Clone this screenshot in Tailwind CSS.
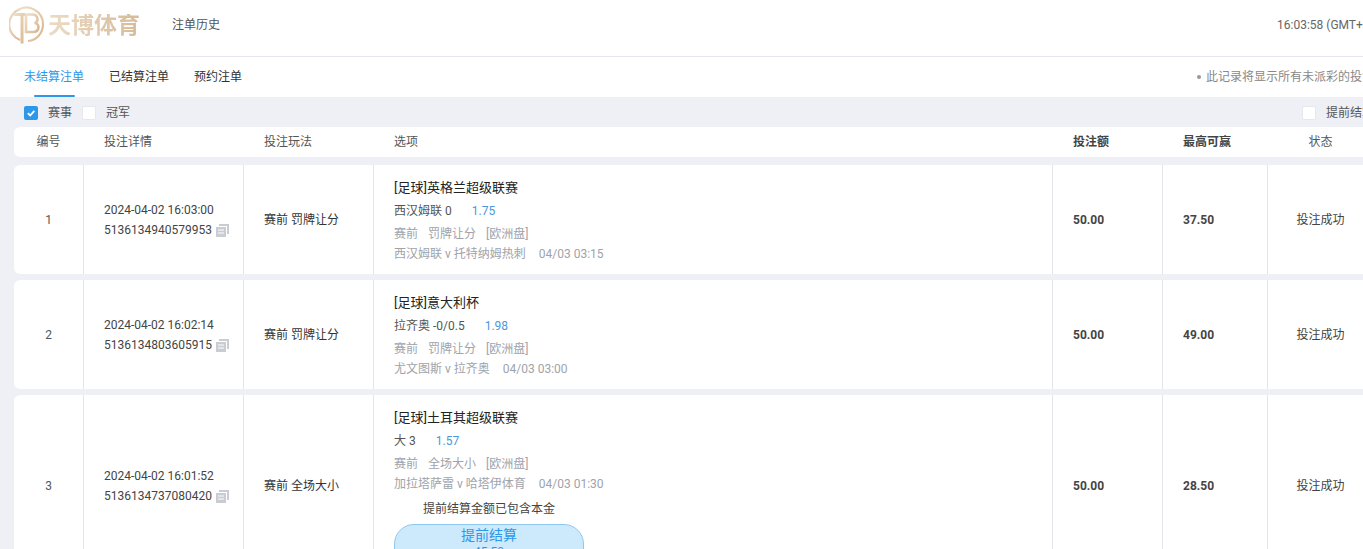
<!doctype html>
<html lang="zh">
<head>
<meta charset="utf-8">
<script src="https://cdn.jsdelivr.net/npm/@tailwindcss/browser@4"></script>
</head>
<body class="m-0 h-[549px] w-[1363px] overflow-hidden bg-[#eef0f5] text-xs text-[#333] font-['Roboto','Noto_Sans_CJK_SC',sans-serif]">
<div class="w-[1500px]">
  <header class="flex h-[57px] items-center border-b border-[#e6e8ee] bg-white pb-[6px]">
    <div class="ml-[9px] flex h-[38px] w-[131px] items-center blur-[0.5px]">
      <svg class="h-[38px] w-[38px] shrink-0" viewBox="0 0 38 38" fill="none">
        <defs><linearGradient id="g" x1="0" y1="0" x2="1" y2="1"><stop offset="0" stop-color="#efdfc9"/><stop offset="1" stop-color="#d8b78f"/></linearGradient></defs>
        <path d="M11 3A16.500 16.500 0 0 0 11 34" stroke="url(#g)" stroke-width="2.200"/>
        <path d="M9 4A16.500 16.500 0 0 1 34 18.500A16.500 16.500 0 0 1 19 35" stroke="url(#g)" stroke-width="2.200"/>
        <path d="M5 8.500h11M13 8.500v29" stroke="url(#g)" stroke-width="3"/>
        <path d="M17 8.500h6.500c6 0 6.500 8 2 8.500c5.500 .5 5.500 9-1.500 9h-7z" stroke="url(#g)" stroke-width="2.600"/>
      </svg>
      <span class="ml-px bg-linear-to-r from-[#ecdcc6] to-[#d6bb98] bg-clip-text text-[23px] leading-none font-bold text-transparent">天博体育</span>
    </div>
    <span class="ml-8 text-[#555]">注单历史</span>
    <span class="ml-[1057px] whitespace-nowrap text-[#666]">16:03:58 (GMT+8)</span>
  </header>

  <nav class="flex h-[40px] items-stretch bg-white">
    <div class="relative ml-6 flex items-center text-[#2d97ea]">未结算注单<span class="absolute bottom-0 left-[10px] h-[2px] w-[41px] rounded-sm bg-[#2d97ea]"></span></div>
    <div class="ml-[25px] flex items-center text-[#333]">已结算注单</div>
    <div class="ml-[25px] flex items-center text-[#333]">预约注单</div>
    <div class="ml-[955px] flex items-center whitespace-nowrap text-[#888]"><span class="mr-[5px] h-1 w-1 rounded-full bg-[#999]"></span>此记录将显示所有未派彩的投注</div>
  </nav>

  <div class="flex h-[30px] items-center pt-[2px] pl-6 text-[#555]">
    <span class="flex h-[14px] w-[14px] items-center justify-center rounded-[2px] bg-[#2d97ea]">
      <svg class="h-[10px] w-[10px]" viewBox="0 0 10 10" fill="none"><path d="M1.800 5.200 4.200 7.500 8.300 2.800" stroke="#fff" stroke-width="1.800"/></svg>
    </span>
    <span class="ml-[10px]">赛事</span>
    <span class="ml-[10px] h-[14px] w-[14px] rounded-[2px] border border-[#e6e8ee] bg-white"></span>
    <span class="ml-[10px]">冠军</span>
    <span class="ml-[1172px] h-[14px] w-[14px] rounded-[2px] border border-[#e6e8ee] bg-white"></span>
    <span class="ml-[10px] whitespace-nowrap">提前结算</span>
  </div>

  <div class="ml-[14px] grid h-[30px] grid-cols-[70px_160px_130px_679px_110px_105px_105px] items-center rounded-t-md rounded-bl-md bg-white text-[#555]">
    <span class="pr-px text-center">编号</span>
    <span class="pl-5">投注详情</span>
    <span class="pl-5">投注玩法</span>
    <span class="pl-5">选项</span>
    <span class="pl-5 font-bold text-[#444]">投注额</span>
    <span class="pl-5 font-bold text-[#444]">最高可赢</span>
    <span class="text-center">状态</span>
  </div>

  <div class="mt-2 ml-[14px] flex flex-col gap-[6px]">
    <div class="grid h-[109px] grid-cols-[70px_160px_130px_679px_110px_105px_105px] items-stretch rounded-md bg-white">
      <div class="flex items-center justify-center border-r border-[#e3e5ea] text-[#555]">1</div>
      <div class="flex flex-col justify-center gap-[5px] border-r border-[#e3e5ea] pt-[2px] pl-5 leading-[15px] text-[#444]">
        <span>2024-04-02 16:03:00</span>
        <span class="flex items-center">5136134940579953
          <svg class="ml-[4px] h-[13px] w-[13px]" viewBox="0 0 13 13"><path d="M3 0h10v10h-2V2H3z" fill="#c9ccd3"/><path d="M0 3h10v10H0z" fill="#c9ccd3"/><path d="M2 6h6M2 9h6" stroke="#fff"/></svg>
        </span>
      </div>
      <div class="flex items-center border-r border-[#e3e5ea] pt-px pl-5 text-[#333]">赛前 罚牌让分</div>
      <div class="flex flex-col border-r border-[#e3e5ea] pt-[13px] pl-5">
        <div class="text-[13px] leading-5 text-[#222]">[足球]英格兰超级联赛</div>
        <div class="mt-[3px] leading-5 text-[#555]">西汉姆联 0<span class="ml-5 text-[#4c97db]">1.75</span></div>
        <div class="mt-[3px] flex gap-[10px] leading-5 text-[#a0a3aa]"><span>赛前</span><span>罚牌让分</span><span>[欧洲盘]</span></div>
        <div class="flex gap-[13px] leading-5 text-[#a0a3aa]"><span>西汉姆联 v 托特纳姆热刺</span><span>04/03 03:15</span></div>
      </div>
      <div class="flex items-center border-r border-[#e3e5ea] pl-5 font-bold text-[#444]">50.00</div>
      <div class="flex items-center border-r border-[#e3e5ea] pl-5 font-bold text-[#444]">37.50</div>
      <div class="flex items-center justify-center text-[#444]">投注成功</div>
    </div>

    <div class="grid h-[109px] grid-cols-[70px_160px_130px_679px_110px_105px_105px] items-stretch rounded-md bg-white">
      <div class="flex items-center justify-center border-r border-[#e3e5ea] text-[#555]">2</div>
      <div class="flex flex-col justify-center gap-[5px] border-r border-[#e3e5ea] pt-[2px] pl-5 leading-[15px] text-[#444]">
        <span>2024-04-02 16:02:14</span>
        <span class="flex items-center">5136134803605915
          <svg class="ml-[4px] h-[13px] w-[13px]" viewBox="0 0 13 13"><path d="M3 0h10v10h-2V2H3z" fill="#c9ccd3"/><path d="M0 3h10v10H0z" fill="#c9ccd3"/><path d="M2 6h6M2 9h6" stroke="#fff"/></svg>
        </span>
      </div>
      <div class="flex items-center border-r border-[#e3e5ea] pt-px pl-5 text-[#333]">赛前 罚牌让分</div>
      <div class="flex flex-col border-r border-[#e3e5ea] pt-[13px] pl-5">
        <div class="text-[13px] leading-5 text-[#222]">[足球]意大利杯</div>
        <div class="mt-[3px] leading-5 text-[#555]">拉齐奥 -0/0.5<span class="ml-5 text-[#4c97db]">1.98</span></div>
        <div class="mt-[3px] flex gap-[10px] leading-5 text-[#a0a3aa]"><span>赛前</span><span>罚牌让分</span><span>[欧洲盘]</span></div>
        <div class="flex gap-[13px] leading-5 text-[#a0a3aa]"><span>尤文图斯 v 拉齐奥</span><span>04/03 03:00</span></div>
      </div>
      <div class="flex items-center border-r border-[#e3e5ea] pl-5 font-bold text-[#444]">50.00</div>
      <div class="flex items-center border-r border-[#e3e5ea] pl-5 font-bold text-[#444]">49.00</div>
      <div class="flex items-center justify-center text-[#444]">投注成功</div>
    </div>

    <div class="grid h-[181px] grid-cols-[70px_160px_130px_679px_110px_105px_105px] items-stretch rounded-md bg-white">
      <div class="flex items-center justify-center border-r border-[#e3e5ea] text-[#555]">3</div>
      <div class="flex flex-col justify-center gap-[5px] border-r border-[#e3e5ea] pt-[2px] pl-5 leading-[15px] text-[#444]">
        <span>2024-04-02 16:01:52</span>
        <span class="flex items-center">5136134737080420
          <svg class="ml-[4px] h-[13px] w-[13px]" viewBox="0 0 13 13"><path d="M3 0h10v10h-2V2H3z" fill="#c9ccd3"/><path d="M0 3h10v10H0z" fill="#c9ccd3"/><path d="M2 6h6M2 9h6" stroke="#fff"/></svg>
        </span>
      </div>
      <div class="flex items-center border-r border-[#e3e5ea] pt-px pl-5 text-[#333]">赛前 全场大小</div>
      <div class="flex flex-col border-r border-[#e3e5ea] pt-[13px] pl-5">
        <div class="text-[13px] leading-5 text-[#222]">[足球]土耳其超级联赛</div>
        <div class="mt-[3px] leading-5 text-[#555]">大 3<span class="ml-5 text-[#4c97db]">1.57</span></div>
        <div class="mt-[3px] flex gap-[10px] leading-5 text-[#a0a3aa]"><span>赛前</span><span>全场大小</span><span>[欧洲盘]</span></div>
        <div class="flex gap-[13px] leading-5 text-[#a0a3aa]"><span>加拉塔萨雷 v 哈塔伊体育</span><span>04/03 01:30</span></div>
        <div class="mt-[5px] w-[190px] text-center leading-5 text-[#444]">提前结算金额已包含本金</div>
        <div class="mt-[5px] flex h-[50px] w-[190px] flex-col items-center rounded-[20px] border border-[#8fc8ee] bg-[#cdeafd] text-[#2d97ea]">
          <span class="text-sm leading-5">提前结算</span>
          <span class="leading-[14px]">45.50</span>
        </div>
      </div>
      <div class="flex items-center border-r border-[#e3e5ea] pl-5 font-bold text-[#444]">50.00</div>
      <div class="flex items-center border-r border-[#e3e5ea] pl-5 font-bold text-[#444]">28.50</div>
      <div class="flex items-center justify-center text-[#444]">投注成功</div>
    </div>
  </div>
</div>
</body>
</html>
